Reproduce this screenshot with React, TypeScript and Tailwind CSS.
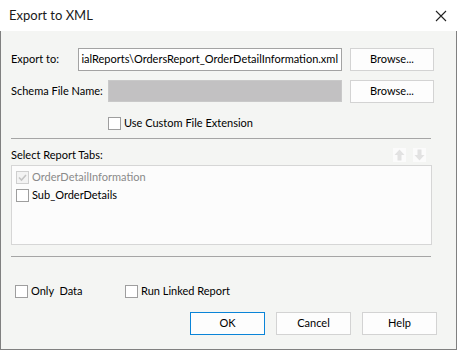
import React from "react";

const font = { fontFamily: 'Lato, "Noto Sans", sans-serif' };

function Box({ checked = false, disabled = false }: { checked?: boolean; disabled?: boolean }) {
  return (
    <div
      className={
        "w-[13px] h-[13px] shrink-0 border flex items-center justify-center " +
        (disabled ? "border-[#cfcfcf] bg-[#f3f3f3]" : "border-[#9e9e9e] bg-white")
      }
    >
      {checked && (
        <svg width="11" height="11" viewBox="0 0 11 11">
          <path d="M2 5.5 L4.5 8 L9 3" fill="none" stroke="#c4c4c4" strokeWidth="1.6" />
        </svg>
      )}
    </div>
  );
}

function Btn({ children, w, primary = false }: { children: React.ReactNode; w: string; primary?: boolean }) {
  return (
    <div
      className={
        w +
        " h-[23px] flex items-center justify-center border bg-[#fdfdfd] text-[11px] text-black " +
        (primary ? "border-[#0a84d8]" : "border-[#d3d3d3]")
      }
    >
      {children}
    </div>
  );
}

function Arrow({ up }: { up: boolean }) {
  return (
    <div className="w-[13px] h-[14px] bg-[#fbfbfb] flex items-center justify-center">
      <svg width="11" height="12" viewBox="0 0 11 12">
        {up ? (
          <path d="M5.5 0.5 L10.5 6 L7.5 6 L7.5 11.5 L3.5 11.5 L3.5 6 L0.5 6 Z" fill="#e2e2e2" />
        ) : (
          <path d="M5.5 11.5 L10.5 6 L7.5 6 L7.5 0.5 L3.5 0.5 L3.5 6 L0.5 6 Z" fill="#e2e2e2" />
        )}
      </svg>
    </div>
  );
}

export default function App() {
  return (
    <div className="w-[457px] h-[350px] flex flex-col text-[11px] text-black whitespace-nowrap" style={font}>
      <div className="h-[31px] bg-white flex items-center justify-between pl-[9px] pr-[10px]">
        <span className="text-[13px] text-[#1a1a1a]">Export to XML</span>
        <svg width="12" height="12" viewBox="0 0 12 12">
          <path d="M1 1 L11 11 M11 1 L1 11" stroke="#222" strokeWidth="1.1" />
        </svg>
      </div>
      <div className="flex-1 bg-[#f4f5f3] border-l border-r border-b border-[#808080] pl-[10px] flex flex-col">
        <div className="mt-[17px] h-[23px] flex items-center">
          <div className="w-[67px]">Export to:</div>
          <div className="w-[264px] h-[23px] border border-[#a3a3a3] bg-white flex items-center justify-end pr-[3px] overflow-hidden">
            <span>ialReports\OrdersReport_OrderDetailInformation.xml</span>
          </div>
          <div className="ml-[8px]">
            <Btn w="w-[84px]">Browse...</Btn>
          </div>
        </div>
        <div className="mt-[9px] h-[22px] flex items-center">
          <div className="w-[97px]">Schema File Name:</div>
          <div className="w-[234px] h-[22px] border border-[#c9c9c9] bg-[#c2c1c2]" />
          <div className="ml-[8px]">
            <Btn w="w-[84px]">Browse...</Btn>
          </div>
        </div>
        <div className="mt-[14px] h-[14px] flex items-center pl-[97px] gap-[3px]">
          <Box />
          <span>Use Custom File Extension</span>
        </div>
        <div className="mt-[8px] h-px w-[420px] bg-[#a5a5a5]" />
        <div className="mt-[7px] h-[18px] w-[420px] flex items-center justify-between">
          <span>Select Report Tabs:</span>
          <div className="flex gap-[7px] pr-[5px]">
            <Arrow up />
            <Arrow up={false} />
          </div>
        </div>
        <div className="mt-px h-[80px] w-[421px] border border-[#d6d6d6] bg-[#fcfcfc] flex flex-col pt-[2px] pl-[4px]">
          <div className="h-[18px] flex items-center gap-[3px]">
            <Box checked disabled />
            <span className="text-[#8a8a8a]">OrderDetailInformation</span>
          </div>
          <div className="h-[18px] flex items-center gap-[3px]">
            <Box />
            <span>Sub_OrderDetails</span>
          </div>
        </div>
        <div className="mt-[11px] h-px w-[420px] bg-[#a5a5a5]" />
        <div className="mt-[28px] h-[13px] flex items-center pl-[4px]">
          <div className="w-[110px] flex items-center gap-[3px]">
            <Box />
            <span>Only&nbsp; Data</span>
          </div>
          <div className="flex items-center gap-[3px]">
            <Box />
            <span>Run Linked Report</span>
          </div>
        </div>
        <div className="mt-[14px] flex pl-[179px] gap-[11px]">
          <Btn w="w-[75px]" primary>OK</Btn>
          <Btn w="w-[75px]">Cancel</Btn>
          <Btn w="w-[75px]">Help</Btn>
        </div>
      </div>
    </div>
  );
}
